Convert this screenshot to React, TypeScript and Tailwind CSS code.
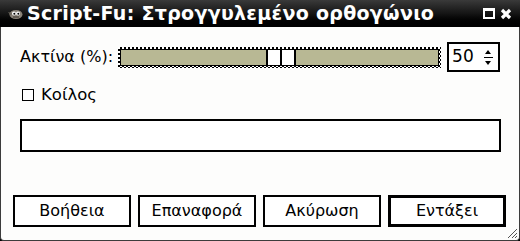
import type { ReactNode } from 'react';

const FONT = { fontFamily: '"DejaVu Sans", "Open Sans", sans-serif' };

function GimpIcon() {
  return (
    <svg width="16" height="12" viewBox="0 0 16 12">
      <ellipse cx="9" cy="6.5" rx="6.5" ry="4.5" fill="#8a8378" />
      <path d="M1 4 L5 5 L4 8 Z" fill="#6b655c" />
      <circle cx="7" cy="5.5" r="2" fill="#fff" />
      <circle cx="11" cy="5.5" r="2" fill="#fff" />
      <circle cx="7.3" cy="5.8" r="1" fill="#000" />
      <circle cx="11.3" cy="5.8" r="1" fill="#000" />
      <path d="M6 9 H12" stroke="#3a352f" strokeWidth="1" />
    </svg>
  );
}

function Button({ children, primary }: { children: ReactNode; primary?: boolean }) {
  return (
    <button
      type="button"
      className={
        primary
          ? 'flex h-[32px] w-[118px] items-center justify-center border-[3px] border-black bg-white text-[16px] text-black'
          : 'flex h-[32px] w-[118px] items-center justify-center border-2 border-black bg-white text-[16px] text-black'
      }
    >
      {children}
    </button>
  );
}

export default function App() {
  return (
    <div className="flex h-[241px] w-[520px] flex-col bg-black" style={FONT}>
      <div className="flex h-[27px] items-center bg-gradient-to-b from-[#3a3a3a] via-[#151515] to-[#000] pl-[7px] pr-[8px]">
        <GimpIcon />
        <span className="ml-[4px] whitespace-nowrap text-[19px] font-bold leading-none tracking-[0.3px] text-white">
          Script-Fu: Στρογγυλεμένο ορθογώνιο
        </span>
        <div className="ml-auto flex items-center gap-[5px]">
          <div className="h-[11px] w-[12px] border-2 border-t-[3px] border-white" />
          <svg width="12" height="12" viewBox="0 0 12 12">
            <path d="M2 2 L10 10 M10 2 L2 10" stroke="#fff" strokeWidth="3.2" />
          </svg>
        </div>
      </div>
      <div className="relative flex flex-1 flex-col rounded-b-[4px] border-x border-b border-[#3c3c3c] bg-[#fdfdfc] px-[19px] text-[16px] text-black">
        <div className="mt-[15px] flex items-center">
          <span className="w-[98px] whitespace-nowrap">Ακτίνα (%):</span>
          <div className="h-[21px] w-[324px] bg-[conic-gradient(#000_25%,#fff_0_50%,#000_0_75%,#fff_0)] bg-[length:4px_4px] p-[2px]">
            <div className="flex h-full border border-black bg-[#b8b894]">
              <div className="w-[145px]" />
              <div className="flex h-full w-[30px] border-x-2 border-black bg-white">
                <div className="flex-1" />
                <div className="w-[2px] bg-black" />
                <div className="flex-1" />
              </div>
            </div>
          </div>
          <div className="ml-[6px] flex h-[30px] w-[53px] items-center border-2 border-black bg-white pl-[3px] pr-[5px]">
            <span className="text-[17px]">50</span>
            <div className="ml-auto flex flex-col items-center gap-[3px]">
              <div className="h-0 w-0 border-x-[3px] border-b-[4px] border-x-transparent border-b-black" />
              <div className="h-[1px] w-[9px] bg-black" />
              <div className="h-0 w-0 border-x-[3px] border-t-[4px] border-x-transparent border-t-black" />
            </div>
          </div>
        </div>
        <div className="mt-[11px] flex items-center pl-[2px]">
          <div className="h-[12px] w-[12px] border border-black bg-white" />
          <span className="ml-[7px] text-[16.5px]">Κοίλος</span>
        </div>
        <div className="mt-[11px] h-[33px] w-[481px] border-2 border-black bg-white" />
        <div className="-mx-[7px] mt-auto mb-[13px] flex gap-[7px]">
          <Button>Βοήθεια</Button>
          <Button>Επαναφορά</Button>
          <Button>Ακύρωση</Button>
          <Button primary>Εντάξει</Button>
        </div>
        <svg className="absolute bottom-[1px] right-[1px]" width="12" height="12" viewBox="0 0 12 12">
          <path d="M11 2 L2 11 M11 6 L6 11 M11 9 L9 11" stroke="#555" strokeWidth="1" />
        </svg>
      </div>
    </div>
  );
}
